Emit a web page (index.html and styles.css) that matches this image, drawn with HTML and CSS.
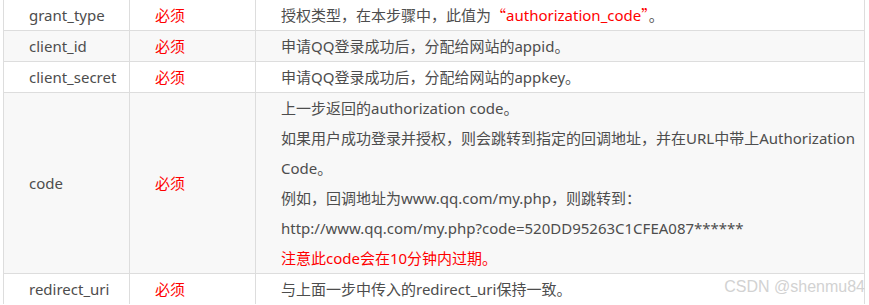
FILE: index.html
```html
<!DOCTYPE html>
<html lang="zh-CN">
<head>
  <meta charset="UTF-8" />
  <title>获取Access Token参数</title>
  <link rel="stylesheet" href="styles.css">
</head>
<body>
  <div class="wrap">
    <table class="params">
      <colgroup>
        <col class="c-name">
        <col class="c-req">
        <col class="c-desc">
      </colgroup>
      <tr>
        <td>grant_type</td>
        <td class="req">必须</td>
        <td>授权类型，在本步骤中，此值为<span class="red"><span class="cjk">“</span>authorization_code<span class="cjk">”</span></span>。</td>
      </tr>
      <tr>
        <td>client_id</td>
        <td class="req">必须</td>
        <td>申请QQ登录成功后，分配给网站的appid。</td>
      </tr>
      <tr>
        <td>client_secret</td>
        <td class="req">必须</td>
        <td>申请QQ登录成功后，分配给网站的appkey。</td>
      </tr>
      <tr>
        <td>code</td>
        <td class="req">必须</td>
        <td class="multi">
          <p>上一步返回的authorization code。</p>
          <p>如果用户成功登录并授权，则会跳转到指定的回调地址，并在URL中带上Authorization Code。</p>
          <p>例如，回调地址为www.qq.com/my.php，则跳转到：</p>
          <p>http://www.qq.com/my.php?code=520DD95263C1CFEA087******</p>
          <p class="red">注意此code会在10分钟内过期。</p>
        </td>
      </tr>
      <tr>
        <td>redirect_uri</td>
        <td class="req">必须</td>
        <td>与上面一步中传入的redirect_uri保持一致。</td>
      </tr>
    </table>
    <div class="watermark">CSDN @shenmu84</div>
  </div>
</body>
</html>
```

FILE: styles.css
```css
body {
  margin: 0;
  background: #fff;
  font-family: "Noto Sans", "Noto Sans CJK SC", sans-serif;
  font-size: 15px;
  color: #4d4d4d;
  overflow: hidden;
}
.wrap {
  position: relative;
  height: 305px;
  padding-left: 3px;
}
.params {
  border-collapse: collapse;
  width: 862px;
  margin-top: -1px;
  table-layout: fixed;
}
.c-name { width: 126px; }
.c-req { width: 126px; }
.params td {
  border: 1px solid #ddd;
  padding: 0 0 0 25px;
  line-height: 30px;
  vertical-align: middle;
  white-space: nowrap;
}
.params td.multi {
  white-space: normal;
}
.params tr:nth-child(even) td {
  background: #f8f8f8;
}
.params p {
  margin: 0;
}
.req, .red {
  color: #f00;
}
.cjk {
  font-family: "Noto Sans CJK SC", sans-serif;
}
.watermark {
  position: absolute;
  right: 4px;
  bottom: 8px;
  font-family: "Liberation Sans", Arial, sans-serif;
  font-size: 16px;
  color: #d2d2d2;
}
```
